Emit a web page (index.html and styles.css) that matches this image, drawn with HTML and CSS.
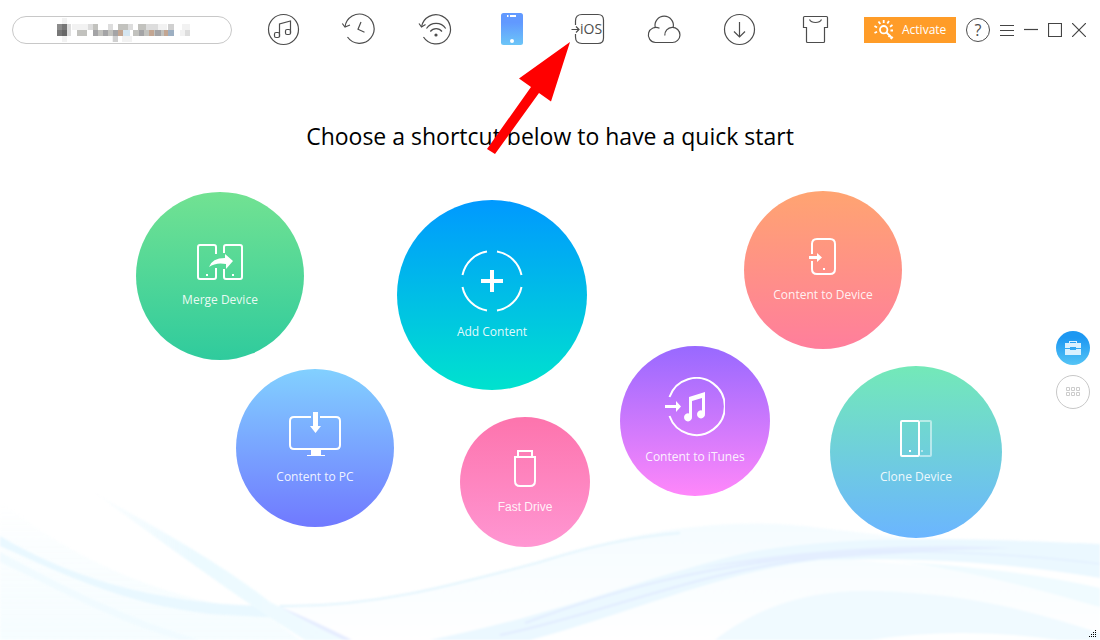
FILE: index.html
```html
<!DOCTYPE html>
<html lang="en">
<head>
    <meta charset="UTF-8">
    <meta name="viewport" content="width=device-width, initial-scale=1.0">
    <title>Device Manager</title>
    <link rel="stylesheet" href="styles.css">
</head>
<body>
    <!-- background waves -->
    <svg class="waves" viewBox="0 0 1100 150" preserveAspectRatio="none" aria-hidden="true">
        <defs>
            <linearGradient id="mist" x1="0" y1="0" x2="0" y2="1">
                <stop offset="0" stop-color="#f2fcff" stop-opacity="0"/>
                <stop offset="1" stop-color="#f6fdff"/>
            </linearGradient>
            <linearGradient id="sheet" x1="0" y1="0" x2="0" y2="1">
                <stop offset="0" stop-color="#f5fcff"/>
                <stop offset="1" stop-color="#ffffff"/>
            </linearGradient>
            <linearGradient id="ribbon" x1="0" y1="0" x2="1" y2="0">
                <stop offset="0" stop-color="#e6f7ff" stop-opacity="0"/>
                <stop offset="0.4" stop-color="#ecfaff"/>
                <stop offset="1" stop-color="#f0fbff"/>
            </linearGradient>
        </defs>
        <path fill="url(#mist)" d="M0 10C60 60 150 108 260 120L300 150H0Z"/>
        <path fill="#e9f8ff" d="M0 46C70 88 160 115 270 116Q300 128 400 130Q300 130 210 124C120 114 50 78 0 56Z"/>
        <path fill="#f1fbff" d="M0 62C60 95 130 130 200 150H180C110 130 50 95 0 72Z"/>
        <path fill="url(#sheet)" d="M275 116C360 118 440 98 530 74C620 45 720 24 820 38C910 48 1010 60 1100 85V150H350Q310 138 275 116Z"/>
        <path fill="url(#ribbon)" d="M90 0C150 35 220 72 270 112Q310 132 350 150H305C240 110 160 50 90 0Z"/>
        <path fill="#e6edff" d="M278 116Q315 131 352 150H344Q312 135 278 116Z"/>
        <path fill="none" stroke="#e4f5fd" stroke-width="2" d="M280 116C370 118 450 96 540 72C590 56 640 46 680 43"/>
        <path fill="#ebf8ff" d="M430 150C560 124 650 85 750 62C860 42 1000 50 1100 54V88C1000 72 900 68 820 70C720 82 640 120 530 150Z"/>
        <path fill="none" stroke="#e2ecff" stroke-width="2" d="M500 145C600 125 700 80 820 68M525 133C620 98 700 78 800 68"/>
        <path fill="#e4eeff" d="M700 78C780 62 900 52 1010 58C940 60 860 66 820 69Q760 70 700 78Z"/>
        <path fill="none" stroke="#e0ecff" d="M860 62C950 60 1040 66 1100 74"/>
        <path fill="#ffffff" d="M850 70C930 68 1010 73 1100 88V106C1010 88 930 74 850 70Z"/>
        <path fill="#f0fbff" d="M890 71C970 76 1040 84 1100 98V117C1030 97 960 78 890 71Z"/>
        <path fill="#f0faff" d="M715 150C760 115 810 100 870 101C960 102 1030 120 1100 143V150Z"/>
        <path fill="#ffffff" d="M870 150Q960 136 1060 150Z"/>
    </svg>

    <header class="topbar">
        <button class="device-picker" aria-label="Select device">
            <svg width="150" height="24" viewBox="-5 0 150 24" shape-rendering="crispEdges" aria-hidden="true">
                <path fill="#f2f2f2" d="M10 0h5v6h-5zM10 18h5v6h-5zM20 6h5v6h-5zM25 6h15v6h-15zM60 18h5v6h-5zM70 18h10v6h-10zM105 6h10v6h-10zM130 6h8v6h-8zM128 12h5v6h-5z"/>
                <path fill="#8c8c8c" d="M5 6h5v6h-5z"/>
                <path fill="#777777" d="M10 6h5v6h-5zM5 12h5v6h-5z"/>
                <path fill="#686868" d="M10 12h5v6h-5z"/>
                <path fill="#dddddd" d="M15 6h4v12h-4zM25 12h5v6h-5zM36 6h10v6h-10zM61 18h5v6h-5zM56 6h5v6h-5zM76 6h5v6h-5zM91 6h15v6h-15zM133 12h5v6h-5z"/>
                <path fill="#c2c2be" d="M25 12h10v6h-10zM41 6h5v6h-5zM45 12h16v6h-16zM66 6h10v6h-10zM86 6h8v6h-8zM81 12h35v6h-35z"/>
                <path fill="#a4a4a6" d="M41 12h5v6h-5zM51 12h5v6h-5zM61 12h5v6h-5zM87 12h5v6h-5zM103 12h6v6h-6z"/>
                <path fill="#c3a692" d="M66 12h5v6h-5zM97 12h5v6h-5zM112 12h4v6h-4z"/>
                <path fill="#d4e5f0" d="M71 12h7v6h-7z"/>
                <path fill="#9dafc2" d="M116 12h6v6h-6z"/>
                <path fill="#d0d0d0" d="M61 18h5v6h-5zM116 6h6v6h-6z"/>
            </svg>
        </button>

        <nav class="tools">
            <button aria-label="Music">
                <svg viewBox="0 0 40 40">
                    <circle cx="19.5" cy="19.5" r="15"/>
                    <path d="M15.5 27V14L26.5 11V23.5"/>
                    <rect x="10.5" y="22.5" width="5" height="5" rx="1.5"/>
                    <rect x="21.5" y="19.5" width="5" height="5" rx="1.5"/>
                </svg>
            </button>
            <button aria-label="History">
                <svg viewBox="0 0 40 40">
                    <path d="M5 17A14.6 14.6 0 1 1 7.5 27"/>
                    <path d="M2.3 13.5L5 17L10 15M21 12L18 19.3L24.5 22.3"/>
                </svg>
            </button>
            <button aria-label="Wi-Fi backup">
                <svg viewBox="0 0 40 40">
                    <path d="M5.5 17A14.6 14.6 0 1 1 7.5 27"/>
                    <path d="M3 13.5L5.5 17L9.5 14.5M10.5 18.5A11.5 11.5 0 0 1 29.7 18.5M14.3 21.5A7.5 7.5 0 0 1 26 21.5"/>
                    <circle class="solid" cx="20" cy="25" r="1.6"/>
                </svg>
            </button>
            <button aria-label="Device">
                <svg viewBox="0 0 40 40">
                    <defs>
                        <linearGradient id="phone" x1="0" y1="0" x2="0" y2="1">
                            <stop offset="0.3" stop-color="#6199ff"/>
                            <stop offset="1" stop-color="#6cc5f7"/>
                        </linearGradient>
                    </defs>
                    <rect class="phone" x="9" y="3" width="22" height="32" rx="2.5"/>
                    <path class="white" d="M15 5h1.500v2H15zM18 5h6v2h-6z"/>
                    <circle class="white" cx="20" cy="31" r="2"/>
                </svg>
            </button>
            <button aria-label="Move to iOS">
                <svg viewBox="0 0 40 40">
                    <path d="M7.5 15V11Q7.5 4.500 14 4.500H30Q35.500 4.500 35.500 10V28Q35.500 33.500 30 33.500H14Q7.500 33.500 7.500 27V24"/>
                    <path d="M3.500 19.500H10.500M8 16.500L11 19.500L8 22.500"/>
                    <text x="12" y="24">iOS</text>
                </svg>
            </button>
            <button aria-label="Cloud">
                <svg viewBox="0 0 40 40">
                    <path d="M15.5 18.2A7.6 7.6 0 1 0 11.500 32.500H28A7.6 7.6 0 1 0 20.8 25.500"/>
                    <path d="M11.2 17.3A9.2 9.2 0 1 1 29.200 17.3"/>
                </svg>
            </button>
            <button aria-label="Download">
                <svg viewBox="0 0 40 40">
                    <circle cx="19.5" cy="19.5" r="15"/>
                    <path d="M19.5 12V26.5M14 21.5L19.5 27L25 21.5"/>
                </svg>
            </button>
            <button aria-label="Skins">
                <svg viewBox="0 0 40 40">
                    <path d="M8.5 6.5H30.5Q31.5 6.5 31.5 7.5V17.5H28.5V31.5Q28.5 32.5 27.5 32.5H11.5Q10.5 32.5 10.5 31.5V17.5H7.5V7.5Q7.5 6.5 8.5 6.5Z"/>
                    <path d="M13.5 9.5Q15 12.5 19.5 12.5Q24 12.5 25.5 9.5"/>
                </svg>
            </button>
        </nav>

        <button class="activate">
            <svg width="22" height="22" viewBox="0 0 22 22" aria-hidden="true">
                <circle cx="10.7" cy="10.7" r="3.7"/>
                <path d="M13.5 13.5L19.5 19.5M15.5 18L17.5 15.8M17.7 20L19.8 17.8"/>
                <path d="M1.5 7L4 8.5M1.5 14L4 12.7M5.5 2.5L7.3 5M10.7 1V4M16 2L14.3 4.5M19.5 6L17 7.7M20 11.5H17.5"/>
            </svg>
            <span>Activate</span>
        </button>

        <div class="window-buttons">
            <button class="help" aria-label="Help">?</button>
            <button aria-label="Menu"><svg viewBox="0 0 14 14"><path d="M0 2.5H14M0 7.5H14M0 12.5H14"/></svg></button>
            <button aria-label="Minimize"><svg viewBox="0 0 14 14"><path d="M0 6.5H14"/></svg></button>
            <button aria-label="Maximize"><svg viewBox="0 0 14 14"><path d="M.5.5H13.5V13.5H.5Z"/></svg></button>
            <button aria-label="Close"><svg viewBox="0 0 14 14"><path d="M0 0L14 14M14 0L0 14"/></svg></button>
        </div>
    </header>

    <main>
        <h1>Choose a shortcut below to have a quick start</h1>

        <div class="bubbles">
            <button class="bubble merge">
                <svg width="46" height="36" viewBox="0 0 46 36">
                    <path d="M19 10V3Q19 1 17 1H3Q1 1 1 3V33Q1 35 3 35H17Q19 35 19 33V24M27 9V3Q27 1 29 1H43Q45 1 45 3V33Q45 35 43 35H29Q27 35 27 33V25"/>
                    <path class="fill" d="M12 23Q15 14 28 14V10L36 17L29 25V20Q19 18 12 23ZM9 30h2v2H9zM35 30h2v2h-2z"/>
                </svg>
                <span>Merge Device</span>
            </button>
            <button class="bubble add">
                <svg width="62" height="62" viewBox="0 0 62 62">
                    <path d="M26 1.5A30 30 0 0 0 1.5 25M36 1.5A30 30 0 0 1 60.5 25M1.5 37A30 30 0 0 0 26 60.5M60.5 37A30 30 0 0 1 36 60.5"/>
                    <path class="fill" d="M29 20h4v9h9v4h-9v9h-4v-9h-9v-4h9z"/>
                </svg>
                <span>Add Content</span>
            </button>
            <button class="bubble device">
                <svg width="28" height="37" viewBox="0 0 28 37">
                    <path d="M3 16V6Q3 1 8 1H21Q26 1 26 6V31Q26 36 21 36H8Q3 36 3 31V23"/>
                    <path class="fill" d="M0 18h8v-3l5 4.5L8 24v-3H0zM14 30h2v2h-2z"/>
                </svg>
                <span>Content to Device</span>
            </button>
            <button class="bubble pc">
                <svg width="52" height="45" viewBox="0 0 52 45">
                    <path d="M22 5H5Q1 5 1 9V33Q1 37 5 37H47Q51 37 51 33V9Q51 5 47 5H31"/>
                    <path class="fill" d="M24 0h5v14h3l-5.5 7L21 14h3zM22 37h10v6h4v1H18v-1h4z"/>
                </svg>
                <span>Content to PC</span>
            </button>
            <button class="bubble fast">
                <svg width="24" height="37" viewBox="0 0 24 37">
                    <path d="M2 7H22V31Q22 36 17 36H7Q2 36 2 31ZM5 7V1H19V7"/>
                </svg>
                <span>Fast Drive</span>
            </button>
            <button class="bubble itunes">
                <svg width="60" height="60" viewBox="0 0 60 60">
                    <path d="M4.500 20A28.5 28.5 0 1 1 4.500 39"/>
                    <path class="fill" d="M0 28h11v-4l5 5.500-5 5.500v-4H0zM24 20L40 15V37A4 4 0 1 1 37 33.500V21L27 24V40A4 4 0 1 1 24 36.500Z"/>
                </svg>
                <span>Content to iTunes</span>
            </button>
            <button class="bubble clone">
                <svg width="32" height="37" viewBox="0 0 32 37">
                    <path class="faded" d="M20 1H30Q31 1 31 2V35Q31 36 30 36H20M21 31h2"/>
                    <rect x="1" y="1" width="18" height="35" rx="1"/>
                    <path class="fill" d="M9 30h2v2H9z"/>
                </svg>
                <span>Clone Device</span>
            </button>
        </div>
    </main>

    <aside class="side-buttons">
        <button class="toolbox" aria-label="Toolbox">
            <svg width="16" height="14" viewBox="0 0 16 14">
                <path d="M0 2H4V0H12V2H16V7H11V6H5V7H0ZM5 1V2H11V1ZM0 8H5V9H11V8H16V14H0Z" fill="#d9f1ff" fill-rule="evenodd"/>
            </svg>
        </button>
        <button class="apps" aria-label="All apps">
            <svg width="14" height="10" viewBox="0 0 14 10">
                <path d="M.5.5h3v3h-3zM5.5.5h3v3h-3zM10.5.5h3v3h-3zM.5 5.5h3v3h-3zM5.5 5.5h3v3h-3zM10.5 5.5h3v3h-3z" fill="none" stroke="#cccccc"/>
            </svg>
        </button>
    </aside>

    <svg class="pointer" width="86" height="114" viewBox="0 0 86 114" aria-hidden="true">
        <path fill="#ff0000" d="M84 0L33 36.5L45 45L1 107L9 112L53 51L65 59.5Z"/>
    </svg>

    <svg class="grip" width="8" height="8" viewBox="0 0 8 8" aria-hidden="true">
        <path d="M6 0h1v1H6zM4 2h1v1H4zM6 2h1v1H6zM2 4h1v1H2zM4 4h1v1H4zM6 4h1v1H6zM0 6h1v1H0zM2 6h1v1H2zM4 6h1v1H4zM6 6h1v1H6z"/>
    </svg>
</body>
</html>
```
FILE: styles.css
```css
* {
    box-sizing: border-box;
}
body {
    position: relative;
    margin: 0;
    min-height: 100vh;
    background-color: #fff;
    font-family: "Open Sans", "Noto Sans", sans-serif;
    color: #000;
}
button {
    padding: 0;
    border: none;
    background: none;
    font-family: inherit;
    cursor: pointer;
}
svg {
    display: block;
    flex-shrink: 0;
}
.waves {
    position: absolute;
    left: 0;
    bottom: 0;
    width: 100%;
    height: 150px;
    filter: blur(1px);
}

/* top bar */
.topbar {
    position: relative;
    display: flex;
    align-items: center;
    height: 60px;
    padding: 0 14px 0 12px;
}
.device-picker {
    display: flex;
    align-items: center;
    justify-content: center;
    width: 220px;
    height: 28px;
    border: 1px solid #c8c8c8;
    border-radius: 14px;
    background-color: #fff;
}
.tools {
    display: flex;
    flex: 1;
    margin: 0 10px 0 14px;
}
.tools button {
    display: flex;
    flex: 1;
    justify-content: center;
}
.tools svg {
    width: 40px;
    height: 40px;
    fill: none;
    stroke: #4d4d4d;
    stroke-width: 1.2;
}
.tools .solid {
    fill: #4d4d4d;
    stroke: none;
}
.tools .phone {
    fill: url(#phone);
    stroke: none;
}
.tools .white {
    fill: #fff;
    stroke: none;
}
.tools text {
    font-size: 14px;
    fill: #4d4d4d;
    stroke: none;
}
.activate {
    display: flex;
    align-items: center;
    gap: 7px;
    width: 92px;
    height: 26px;
    padding-left: 9px;
    background-color: #ff9c28;
    color: #fff;
    font-size: 12px;
    line-height: 16px;
}
.activate svg {
    fill: none;
    stroke: #fff;
    stroke-width: 1.8;
}
.window-buttons {
    display: flex;
    align-items: center;
    gap: 10px;
    margin-left: 10px;
}
.window-buttons svg {
    width: 14px;
    height: 14px;
    fill: none;
    stroke: #444;
    stroke-width: 1.2;
}
.help {
    width: 24px;
    height: 24px;
    border: 1px solid #4d4d4d;
    border-radius: 50%;
    color: #4d4d4d;
    font-size: 16px;
    line-height: 22px;
}

/* shortcuts */
main {
    position: relative;
}
h1 {
    margin: 0;
    padding: 60px 0 38px;
    font-size: 23px;
    font-weight: 400;
    line-height: 32px;
    text-align: center;
}
.bubbles {
    position: relative;
    width: 904px;
    height: 350px;
    margin: 0 auto;
}
.bubble {
    position: absolute;
    display: flex;
    flex-direction: column;
    align-items: center;
    justify-content: center;
    gap: 12px;
    border-radius: 50%;
    color: rgba(255, 255, 255, 0.9);
    font-size: 12px;
    line-height: 16px;
    white-space: nowrap;
}
.bubble svg {
    fill: none;
    stroke: #fff;
    stroke-width: 2;
}
.bubble .fill {
    fill: #fff;
    stroke: none;
}
.bubble .faded {
    opacity: 0.5;
}
.merge {
    left: 38px;
    top: 2px;
    width: 168px;
    height: 168px;
    background: linear-gradient(#72e292, #2fcb9d);
}
.add {
    left: 299px;
    top: 10px;
    width: 190px;
    height: 190px;
    background: linear-gradient(#0099ff, #00e2ce);
}
.device {
    left: 646px;
    top: 1px;
    width: 158px;
    height: 158px;
    background: linear-gradient(#ffa471, #ff7e9c);
}
.pc {
    left: 138px;
    top: 179px;
    width: 158px;
    height: 158px;
    background: linear-gradient(#82d0ff, #7079ff);
}
.fast {
    left: 362px;
    top: 227px;
    width: 130px;
    height: 130px;
    background: linear-gradient(#fd74ad, #ff96d2);
    font-family: "Liberation Sans", Arial, sans-serif;
}
.itunes {
    left: 522px;
    top: 156px;
    width: 150px;
    height: 150px;
    background: linear-gradient(#9869ff, #ff87fa);
}
.clone {
    left: 732px;
    top: 176px;
    width: 172px;
    height: 172px;
    background: linear-gradient(#73e9b8, #6bb5ff);
}

/* floating buttons on the right edge */
.side-buttons {
    position: absolute;
    right: 10px;
    top: 331px;
    display: flex;
    flex-direction: column;
    gap: 10px;
}
.side-buttons button {
    display: flex;
    align-items: center;
    justify-content: center;
    width: 34px;
    height: 34px;
    border-radius: 50%;
}
.toolbox {
    background: linear-gradient(#1d98f2 20%, #55c4f5);
}
.side-buttons .apps {
    border: 1px solid #c8c8c8;
    background-color: #fff;
}

.pointer {
    position: absolute;
    left: calc(50% - 64px);
    top: 42px;
    pointer-events: none;
}
.grip {
    position: absolute;
    right: 3px;
    bottom: 2px;
}
```
